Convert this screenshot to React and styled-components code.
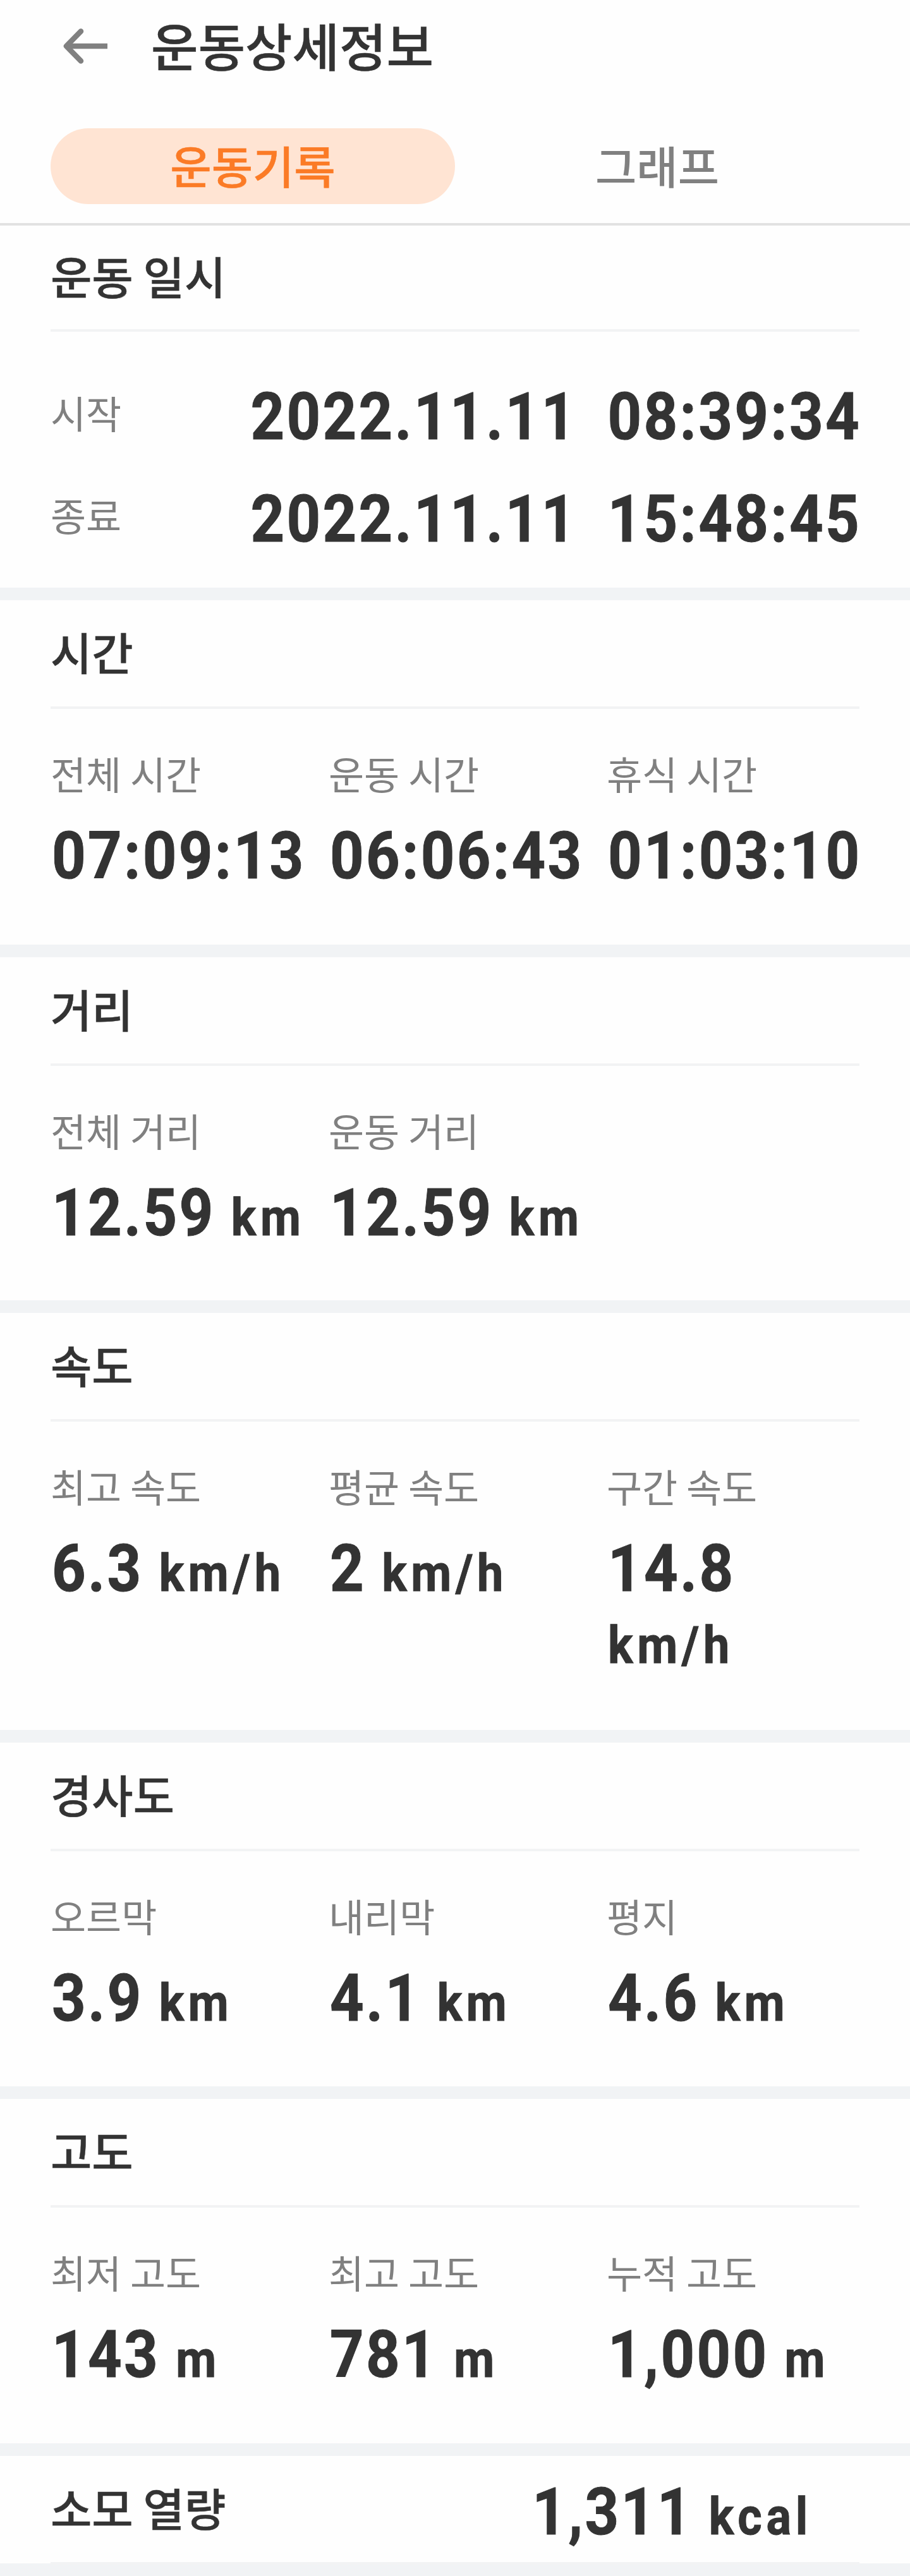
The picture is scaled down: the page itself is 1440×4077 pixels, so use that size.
import React from 'react'
import styled, { createGlobalStyle } from 'styled-components'

const GlobalStyle = createGlobalStyle`
  body {
    margin: 0;
    background: #fefefe;
    color: #333;
    font-family: 'Noto Sans CJK KR', sans-serif;
  }
`

const Page = styled.div`
  width: 1440px;
  height: 4077px;
  overflow: hidden;
`

const Header = styled.header`
  box-sizing: border-box;
  height: 357px;
  border-bottom: 4px solid #e2e2e2;
`

const TitleBar = styled.div`
  display: flex;
  align-items: center;
  height: 148px;
  padding-left: 98px;
`

const BackIcon = styled.svg`
  width: 74px;
  height: 74px;
  margin-right: 67px;
`

const PageTitle = styled.h1`
  margin: 0;
  padding-bottom: 8px;
  font-size: 81px;
  line-height: 140px;
  font-weight: 500;
  -webkit-text-stroke: 0.5px;
`

const Tabs = styled.nav`
  display: flex;
  margin: 55px 80px 0;
`

const Tab = styled.div`
  flex: 1;
  height: 120px;
  border-radius: 60px;
  background: ${({ $active }) => ($active ? '#ffe4d3' : 'transparent')};
  color: ${({ $active }) => ($active ? '#fb7b26' : '#808080')};
  font-size: 71px;
  line-height: 115px;
  font-weight: 500;
  text-align: center;
  -webkit-text-stroke: ${({ $active }) => ($active ? 0.5 : 0)}px;
`

const Section = styled.section`
  box-sizing: border-box;
  height: ${({ $height }) => $height}px;
  padding: 0 80px;
  border-bottom: 20px solid #f1f3f5;
`

const SectionTitle = styled.h2`
  box-sizing: border-box;
  height: ${({ $height = 172 }) => $height}px;
  margin: 0;
  border-bottom: 4px solid #f2f3f4;
  font-size: 71px;
  line-height: ${({ $height = 172 }) => $height - 11}px;
  font-weight: 500;
  -webkit-text-stroke: 0.5px;
`

const Label = styled.div`
  color: #808080;
  font-size: 61px;
  line-height: 90px;
`

// Roboto squeezed a little to get the narrow numerals
const Value = styled.div`
  font-family: Roboto, sans-serif;
  font-size: 104px;
  line-height: 114px;
  font-weight: 700;
  letter-spacing: 3.7px;
  white-space: pre-wrap;
  transform: scaleX(0.9);
  transform-origin: ${({ $align = 'left' }) => $align} top;
  -webkit-text-stroke: 1px;
`

const Unit = styled.span`
  font-size: 82px;
  line-height: 1;
  letter-spacing: 7.5px;
`

const DateRow = styled.div`
  display: flex;
  justify-content: space-between;
  align-items: center;
  height: 162px;

  ${Label} {
    padding-bottom: 14px;
  }

  ${Value} {
    margin-right: -3px;
    word-spacing: -3px;
  }
`

const Dates = styled.div`
  padding-top: 54px;
`

const Stats = styled.div`
  display: grid;
  grid-template-columns: repeat(3, 400px);
  column-gap: 40px;
  padding-top: 57px;

  ${Value} {
    width: 454px;
    margin: 29px 0 0 2px;
  }
`

const Summary = styled.div`
  display: flex;
  justify-content: space-between;
  padding-right: 75px;

  ${Value} {
    margin-top: 32px;
  }
`

const SECTIONS = [
  {
    title: '시간',
    height: 565,
    stats: [
      ['전체 시간', '07:09:13'],
      ['운동 시간', '06:06:43'],
      ['휴식 시간', '01:03:10'],
    ],
  },
  {
    title: '거리',
    height: 563,
    stats: [
      ['전체 거리', '12.59', 'km'],
      ['운동 거리', '12.59', 'km'],
    ],
  },
  {
    title: '속도',
    height: 680,
    stats: [
      ['최고 속도', '6.3', 'km/h'],
      ['평균 속도', '2', 'km/h'],
      ['구간 속도', '14.8', 'km/h'],
    ],
  },
  {
    title: '경사도',
    height: 564,
    stats: [
      ['오르막', '3.9', 'km'],
      ['내리막', '4.1', 'km'],
      ['평지', '4.6', 'km'],
    ],
  },
  {
    title: '고도',
    height: 565,
    stats: [
      ['최저 고도', '143', 'm'],
      ['최고 고도', '781', 'm'],
      ['누적 고도', '1,000', 'm'],
    ],
  },
]

const Stat = ({ label, value, unit }) => (
  <div>
    <Label>{label}</Label>
    <Value>
      {value}
      {unit && <Unit> {unit}</Unit>}
    </Value>
  </div>
)

const App = () => (
  <Page>
    <GlobalStyle />
    <Header>
      <TitleBar>
        <BackIcon viewBox='0 0 74 74' fill='none' stroke='#808080'>
          <path d='M72 36H8' strokeWidth='8.5' />
          <path
            d='M30 12.5L7 36L30 59.5'
            strokeWidth='8.5'
            strokeLinecap='round'
            strokeLinejoin='round'
          />
        </BackIcon>
        <PageTitle>운동상세정보</PageTitle>
      </TitleBar>
      <Tabs>
        <Tab $active>운동기록</Tab>
        <Tab>그래프</Tab>
      </Tabs>
    </Header>
    <Section $height={593}>
      <SectionTitle $height={168}>운동 일시</SectionTitle>
      <Dates>
        <DateRow>
          <Label>시작</Label>
          <Value $align='right'>2022.11.11  08:39:34</Value>
        </DateRow>
        <DateRow>
          <Label>종료</Label>
          <Value $align='right'>2022.11.11  15:48:45</Value>
        </DateRow>
      </Dates>
    </Section>
    {SECTIONS.map(({ title, height, stats }) => (
      <Section key={title} $height={height}>
        <SectionTitle>{title}</SectionTitle>
        <Stats>
          {stats.map(([label, value, unit]) => (
            <Stat key={label} label={label} value={value} unit={unit} />
          ))}
        </Stats>
      </Section>
    ))}
    <Section $height={190}>
      <SectionTitle as='div'>
        <Summary>
          소모 열량
          <Value $align='right'>
            1,311<Unit> kcal</Unit>
          </Value>
        </Summary>
      </SectionTitle>
    </Section>
  </Page>
)

export default App
